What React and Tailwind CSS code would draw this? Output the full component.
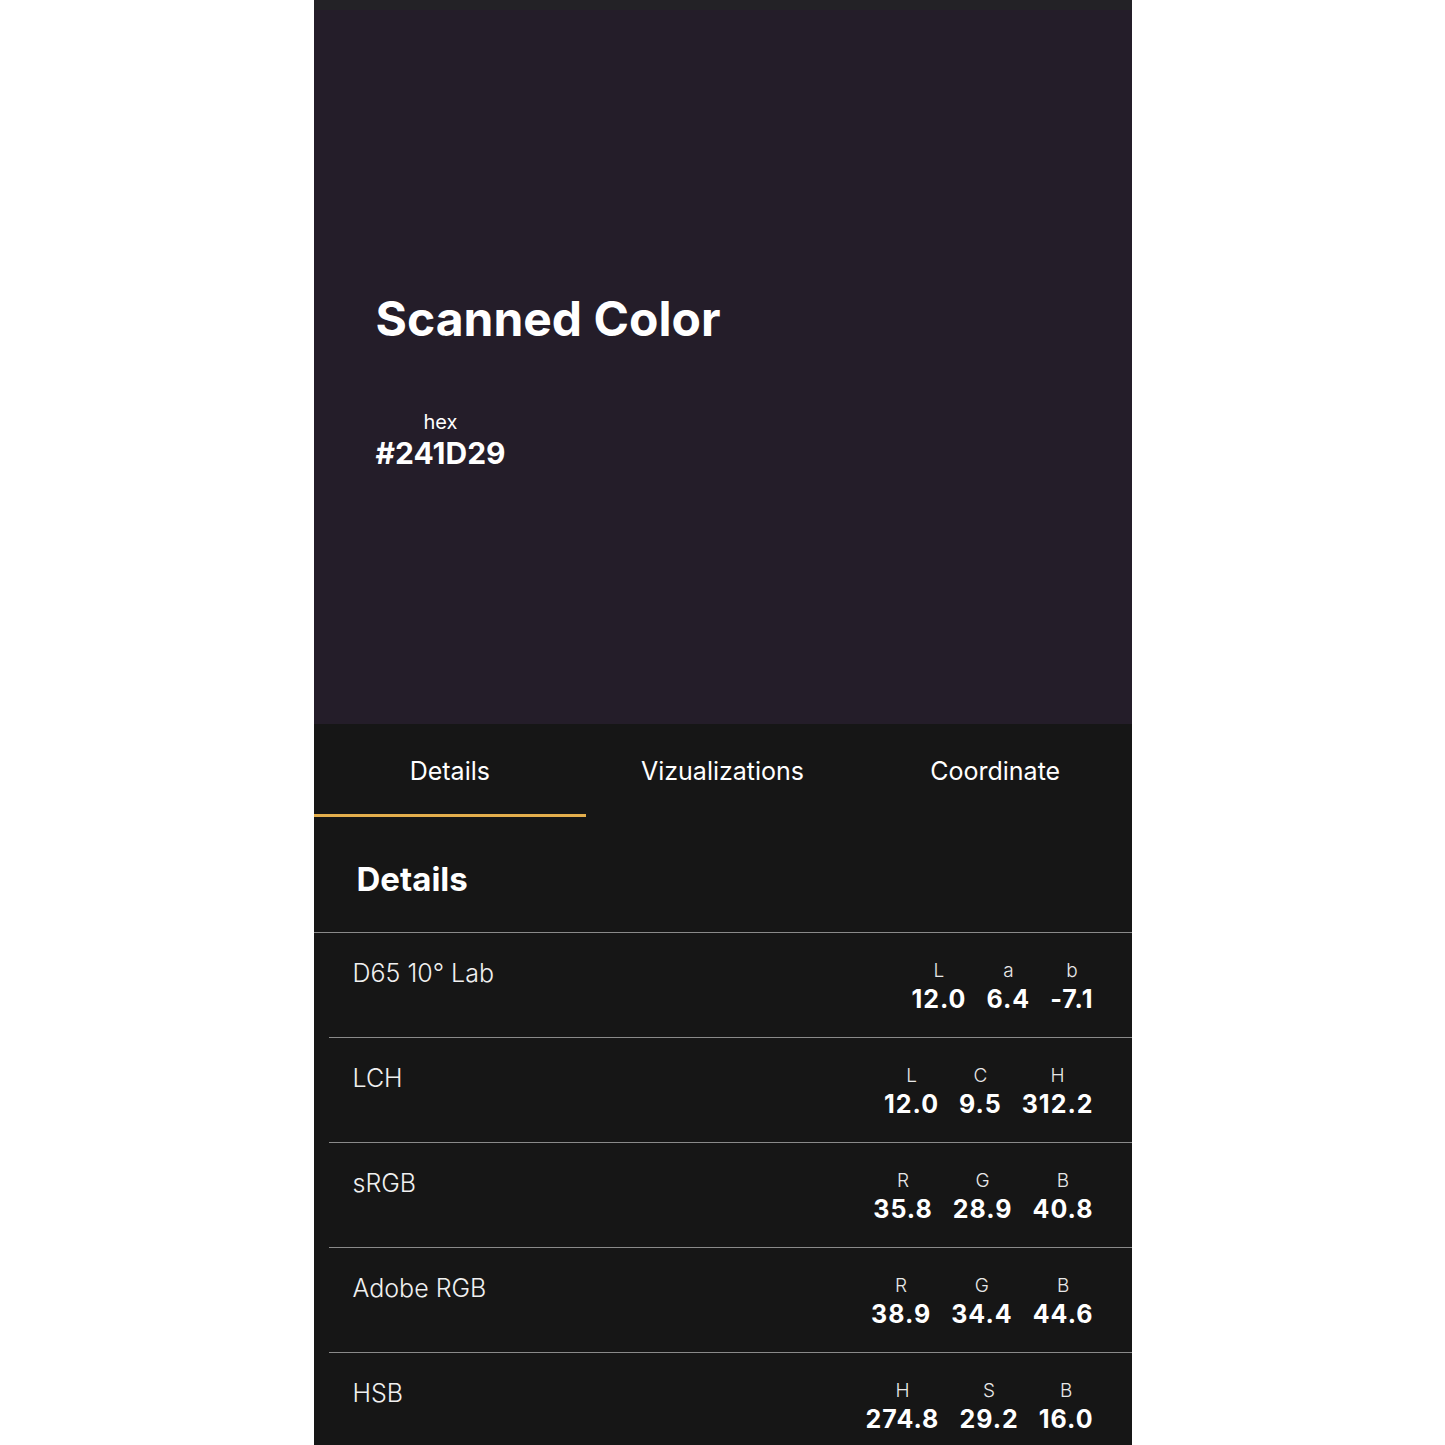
import React from "react";

const rows = [
  { name: "D65 10° Lab", vals: [["L", "12.0"], ["a", "6.4"], ["b", "-7.1"]] },
  { name: "LCH", vals: [["L", "12.0"], ["C", "9.5"], ["H", "312.2"]] },
  { name: "sRGB", vals: [["R", "35.8"], ["G", "28.9"], ["B", "40.8"]] },
  { name: "Adobe RGB", vals: [["R", "38.9"], ["G", "34.4"], ["B", "44.6"]] },
  { name: "HSB", vals: [["H", "274.8"], ["S", "29.2"], ["B", "16.0"]] },
];

export default function App() {
  return (
    <div className="min-h-screen bg-white" style={{ fontFamily: "Inter, 'Noto Sans', sans-serif" }}>
      <div className="mx-auto w-[818px] h-[1445px] overflow-hidden bg-[#161616] text-white">
        <div className="h-[10px] bg-[#232226]" />
        <div className="h-[714px] bg-[#241D29] pl-[62px] pt-[285px]">
          <div className="text-[48px] font-bold leading-[48px]">Scanned Color</div>
          <div className="mt-[67px] inline-flex flex-col items-center">
            <div className="text-[20px] leading-[24px] font-normal">hex</div>
            <div className="mt-[3px] text-[30px] leading-[32px] font-bold">#241D29</div>
          </div>
        </div>
        <div className="flex h-[93px]">
          {["Details", "Vizualizations", "Coordinate"].map((t, i) => (
            <div key={t} className="flex-1 flex flex-col">
              <div className="flex-1 flex items-center justify-center text-[25px] font-normal pt-[5px]">{t}</div>
              <div className={i === 0 ? "h-[3px] bg-[#E3AE4C]" : "h-[3px]"} />
            </div>
          ))}
        </div>
        <div className="h-[116px] border-b border-[#8a8a8a] pl-[43px] flex items-center pt-[10px]">
          <div className="text-[33px] font-bold">Details</div>
        </div>
        <div className="pl-[15px]">
          {rows.map((r) => (
            <div key={r.name} className="h-[105px] border-b border-[#8a8a8a] flex justify-between pl-[24px] pr-[38px] pt-[28px]">
              <div className="-mt-[2px] text-[25px] leading-[28px] font-light text-[#f0f0f0]">{r.name}</div>
              <div className="flex gap-[20px]">
                {r.vals.map(([k, v]) => (
                  <div key={k + v} className="flex flex-col items-center">
                    <div className="text-[19px] leading-[20px] font-light text-[#e8e8e8]">{k}</div>
                    <div className="mt-[2px] text-[25px] leading-[32px] font-bold tracking-[1px]">{v}</div>
                  </div>
                ))}
              </div>
            </div>
          ))}
        </div>
      </div>
    </div>
  );
}
